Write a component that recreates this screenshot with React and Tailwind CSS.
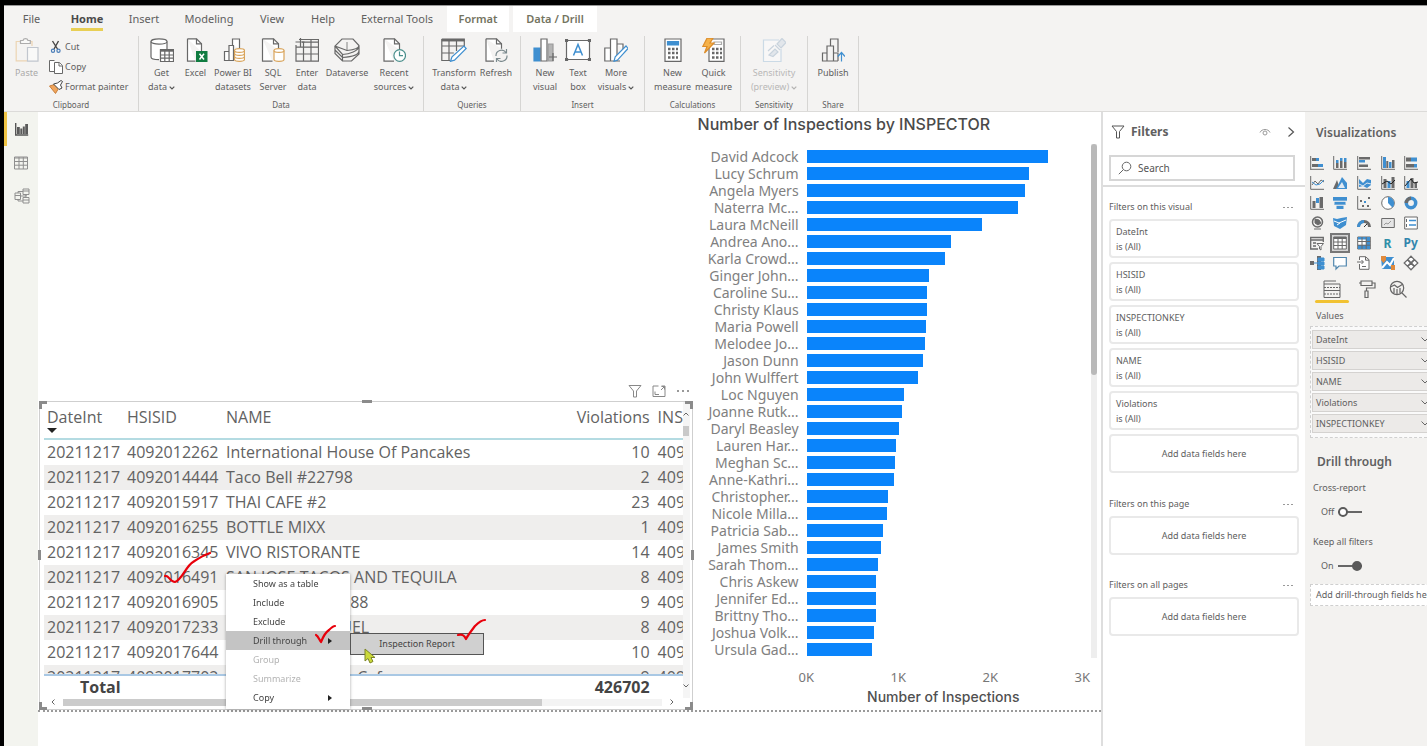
import React from "react";

const INK = "#686868";
const BLUE = "#3f8fd0";

/* ---------- ribbon icons (24 x 24) ---------- */

function Icon({ children, size = "h-6 w-6", box = "0 0 24 24", className = "" }) {
  return (
    <svg viewBox={box} className={`${size} shrink-0 ${className}`} fill="none" stroke={INK} strokeWidth="1.2" aria-hidden="true">
      {children}
    </svg>
  );
}

const Doc = () => (
  <>
    <path d="M3.5 .8h9l5 5v8M3.5 .8v22.4h8" fill="#fff" />
    <path d="M12.5 .8v5h5" />
  </>
);

const Cylinder = ({ color = "#d9a45b" }) => (
  <g stroke={color} fill="#fff">
    <path d="M13 12.5v9c0 1 2.2 1.8 5 1.8s5-.8 5-1.8v-9" />
    <ellipse cx="18" cy="12.5" rx="5" ry="1.9" />
  </g>
);

const icons = {
  paste: (
    <Icon>
      <path d="M7 3.5H1.2v19.3H12M17 8V3.5h-4" stroke="#e6b877" />
      <path d="M5.5 5.500v-3h2.500C8.500 .8 10 .6 10.500 .6s2 .2 2.500 1.900h2.300v3z" fill="#fff" />
      <path d="M12.500 9.500h10.500v13.700H12.500z" fill="#fff" stroke="#8f9bab" />
    </Icon>
  ),
  getData: (
    <Icon>
      <path d="M1 3.500v15.500c0 1.500 3.500 2.700 8 2.700V11.500h8V3.500z" fill="#fff" stroke="none" />
      <path d="M1 3.500v15.500c0 1.500 3.500 2.700 8 2.700M17 11V3.500" />
      <ellipse cx="9" cy="3.500" rx="8" ry="2.700" fill="#fff" />
      <path d="M10.500 11.500h13v12h-13z" fill="#fff" />
      <path d="M10.500 12.500h13" strokeWidth="2.400" />
      <path d="M10.500 17h13M10.500 20.200h13M14.800 12v11.500M19.200 12v11.500" />
    </Icon>
  ),
  excel: (
    <Icon>
      <Doc />
      <rect x="12" y="13" width="11.500" height="11" fill="#107c41" stroke="none" />
      <path d="M15.500 15.700l4.500 5.800M20 15.700l-4.500 5.800" stroke="#fff" strokeWidth="1.500" />
    </Icon>
  ),
  datasets: (
    <Icon>
      <path d="M3.500 22.500v-9h4.500v9zM8 22.500V7.500h4.500v15zM11.500 7.500V1h7v9" fill="#fff" />
      <g stroke="#d9a45b" fill="#fff">
        <path d="M13.500 12.500v9c0 1 2.300 1.800 5 1.800s5-.8 5-1.800v-9" />
        <ellipse cx="18.500" cy="12.500" rx="5" ry="1.900" />
        <path d="M13.500 15.500c0 2.500 10 2.500 10 0M13.500 18.500c0 2.500 10 2.500 10 0" fill="none" />
      </g>
    </Icon>
  ),
  sql: (
    <Icon>
      <path d="M1.500 .8h11l5 5v6M1.500 .8v22.400h10" fill="#fff" />
      <path d="M12.500 .8v5h5" />
      <Cylinder />
    </Icon>
  ),
  enter: (
    <Icon>
      <path d="M4 1.500h19.500v21.700H1V7M1 9.200h22.500M1 16h22.500M8.500 4v19M16 1.500v21.700M7 4.200h16.500" />
      <path d="M.5 4h9M5.500 0v9" />
    </Icon>
  ),
  dataverse: (
    <Icon size="h-6 w-[26px]" box="0 0 26 24">
      <path d="M8 1h11l6 6.500c0 3-7 4.500-12 5L1 8zM1 8l7.500 8.500C15 16 25 13 25 8M1 8v7.500L8.500 23h9L25 16V8M1 12l7.500 7.500C16 19 25 17 25 12.500M8.500 16.500V23" />
      <path d="M13 12.500V4" strokeWidth=".8" />
    </Icon>
  ),
  recent: (
    <Icon>
      <path d="M2 .8h10.500l5 5v6M2 .8v22.400h10" fill="#fff" />
      <path d="M12.500 .8v5h5" />
      <circle cx="17.700" cy="17.500" r="5.800" fill="#fff" stroke="#4a8f8c" />
      <path d="M17.500 13.500v4.200h3.500" stroke="#4a8f8c" />
    </Icon>
  ),
  transform: (
    <Icon size="h-6 w-[26px]" box="0 0 26 24">
      <path d="M.8 1h22.500v10M.8 1v21.500H9M.8 8h22.500M.8 15h12M8 3v19M15.500 3v10" />
      <path d="M.8 2.200h22.500" strokeWidth="2.500" />
      <path d="M9.500 23.300l1.500-4.500L23 8l2.200 2.500-11.700 11.600z" fill="#fff" stroke={BLUE} />
    </Icon>
  ),
  refresh: (
    <Icon>
      <path d="M2 .8h10.500l5 5v5M2 .8v22.400h8" fill="#fff" />
      <path d="M12.500 .8v5h5" />
      <path d="M12 18a5.500 5.500 0 0 1 10-3.500M23 17.500a5.500 5.500 0 0 1-10 3.500M22.500 11v4h-4M12.500 24v-3.500h4" stroke="#7b8a8e" />
    </Icon>
  ),
  newVisual: (
    <Icon>
      <path d="M1 10h6v13H1z" fill={BLUE} stroke={BLUE} />
      <path d="M8 1h6v22H8z" fill="#fff" />
      <path d="M15 6h5v17h-5z" fill="#b5b5b5" stroke="#9a9a9a" />
      <path d="M16 19h8M20 15v8" />
    </Icon>
  ),
  textBox: (
    <Icon size="h-6 w-[26px]" box="0 0 26 24">
      <path d="M1.500 2.500h23v19h-23z" fill="#fff" />
      <path d="M.5 1.500h2v2h-2zM23.500 1.500h2v2h-2zM.5 20.500h2v2h-2zM23.500 20.500h2v2h-2z" fill={INK} />
      <path d="M8.500 17.500L13 6.500l4.500 11M10 14h6" stroke={BLUE} strokeWidth="1.500" />
    </Icon>
  ),
  moreVisuals: (
    <Icon>
      <path d="M.8 10h5.700v13H.8zM6.500 1H13v22H6.500zM13 6h6v5M13 23h3" fill="#fff" />
      <path d="M10 23.300l1.200-4.500L22 8l2 2.500-10.500 11.600z" fill="#fff" stroke={BLUE} />
    </Icon>
  ),
  measure: (
    <Icon>
      <path d="M4 1h16v22.300H4z" fill="#fff" />
      <path d="M6.500 3.500h11V7h-11z" fill={BLUE} stroke={BLUE} />
      <path d="M7 11h10M7 15h10M7 19.500h10" strokeWidth="2.500" strokeDasharray="2.500 1.500" />
    </Icon>
  ),
  quick: (
    <Icon>
      <path d="M7 1h15v22.300H7z" fill="#fff" />
      <path d="M12 4h7.500v2.500H12z" stroke="#aaa" />
      <path d="M10 11h10M10 15h10M10 19.500h10" strokeWidth="2.500" strokeDasharray="2.500 1.500" />
      <path d="M5 .2h6L8 5h4L2.500 15 5 8.500H.8z" fill="#f6b24a" stroke="#dd8d2a" />
    </Icon>
  ),
  sensitivity: (
    <Icon>
      <path d="M17 2H1.500v21.500H19V11" fill="#fff" stroke="#8fb5d5" />
      <path d="M15 6L20 .5l4 4-5 5.500zM13 7l5 5M6 13l6-5.500M7 17l6-6 3 3-5 4.500z" fill="#c9d5e2" stroke="#8aa5c0" />
    </Icon>
  ),
  publish: (
    <Icon>
      <path d="M1.500 23V15H6v8zM6 15V8h6.500v15M9.500 8V1H17v13M6 23h11M12.500 23v-8H17v8" />
      <path d="M20.500 23.500V15.500M16.800 18.500l3.700-4 3.500 4" stroke={BLUE} />
    </Icon>
  ),
};

/* ---------- ribbon ---------- */

const tabs = [
  ["File", "w-[55px]"],
  ["Home", "w-14"],
  ["Insert", "w-[58px]"],
  ["Modeling", "w-[72px]"],
  ["View", "w-[54px]"],
  ["Help", "w-12"],
  ["External Tools", "w-[100px]"],
];

const groups = [
  {
    name: "Data",
    width: "w-[285px]",
    pad: "pl-1",
    items: [
      ["getData", "Get", "data", "w-[37px]", true],
      ["excel", "Excel", "", "w-[31px]"],
      ["datasets", "Power BI", "datasets", "w-11"],
      ["sql", "SQL", "Server", "w-9"],
      ["enter", "Enter", "data", "w-8"],
      ["dataverse", "Dataverse", "", "w-12"],
      ["recent", "Recent", "sources", "w-[46px]", true],
    ],
  },
  {
    name: "Queries",
    width: "w-[97px]",
    pad: "pl-2",
    items: [
      ["transform", "Transform", "data", "w-11", true],
      ["refresh", "Refresh", "", "w-10"],
    ],
  },
  {
    name: "Insert",
    width: "w-[124px]",
    pad: "pl-2",
    items: [
      ["newVisual", "New", "visual", "w-8"],
      ["textBox", "Text", "box", "w-[34px]"],
      ["moreVisuals", "More", "visuals", "w-[42px]", true],
    ],
  },
  {
    name: "Calculations",
    width: "w-24",
    pad: "pl-[7px]",
    items: [
      ["measure", "New", "measure", "w-[41px]"],
      ["quick", "Quick", "measure", "w-[41px]"],
    ],
  },
  {
    name: "Sensitivity",
    width: "w-[67px]",
    pad: "pl-[7px]",
    items: [["sensitivity", "Sensitivity", "(preview)", "w-[52px]", true, true]],
  },
  { name: "Share", width: "w-[51px]", pad: "pl-1", items: [["publish", "Publish", "", "w-[42px]"]] },
];

const Caret = () => (
  <svg viewBox="0 0 6 4" className="ml-0.5 inline-block h-1 w-[6px] align-middle" fill="none" stroke="#555" strokeWidth="1.2" aria-hidden="true">
    <path d="M.7 .7L3 3 5.300 .7" />
  </svg>
);

function Ribbon() {
  return (
    <header className="border-b border-[#dcdbd9] bg-[#f4f3f2] text-[#606060]">
      <nav className="flex h-[26px] text-[11px]" aria-label="Ribbon tabs">
        {tabs.map(([t, w]) => (
          <button key={t} className={`${w} flex shrink-0 flex-col items-center whitespace-nowrap pt-1 leading-[18px]`}>
            {t === "Home" ? (
              <span className="border-b-[3px] border-[#e8cf55] font-bold text-[#4a4a4a]">{t}</span>
            ) : (
              <span>{t}</span>
            )}
          </button>
        ))}
        <button className="mr-1 w-[62px] shrink-0 bg-white font-semibold text-[#74745f]">Format</button>
        <button className="w-[84px] shrink-0 bg-white font-semibold text-[#74745f]">Data / Drill</button>
      </nav>
      <div className="flex h-[79px] pt-1 text-[9px] leading-[14px]">
        <section className="flex w-[135px] shrink-0 flex-col border-r border-[#d6d5d3]">
          <div className="flex flex-1">
            <button disabled className="flex w-[45px] flex-col items-center pt-0.5 opacity-50">
              {icons.paste}
              <span className="mt-1">Paste</span>
            </button>
            <div className="flex flex-col gap-1.5 whitespace-nowrap pt-1">
              <button className="flex items-center gap-0.5">
                <svg viewBox="0 0 14 14" className="h-3.5 w-3.5" fill="none" aria-hidden="true">
                  <path d="M3.500 1l5 8M9.500 1L5 9" stroke="#444" strokeWidth="1.400" />
                  <circle cx="4" cy="10.700" r="1.600" stroke="#4a7db8" strokeWidth="1.200" />
                  <circle cx="9.500" cy="10.700" r="1.600" stroke="#4a7db8" strokeWidth="1.200" />
                </svg>
                Cut
              </button>
              <button className="flex items-center gap-0.5">
                <svg viewBox="0 0 14 14" className="h-3.5 w-3.5" fill="#fff" stroke={INK} aria-hidden="true">
                  <path d="M5.500 11.500h-5v-11h5M5.500 2.500h5l3 3v8h-8z" />
                  <path d="M10 2.500v3.500h3.500" />
                </svg>
                Copy
              </button>
              <button className="flex items-center gap-0.5">
                <svg viewBox="0 0 14 14" className="h-3.5 w-3.5" aria-hidden="true">
                  <path d="M.5 6l5-1.500 4 4-3 5z" fill="#f0a55c" stroke="#c97f3c" />
                  <path d="M4.500 4L10 9.500 13 8l-1.500-3L13.500 1.500 12 .5 8.500 3z" fill="#fff" stroke="#444" />
                </svg>
                Format painter
              </button>
            </div>
          </div>
          <p className="text-center text-[8px] leading-3">Clipboard</p>
        </section>
        {groups.map((g) => (
          <section key={g.name} className={`${g.width} flex shrink-0 flex-col border-r border-[#d6d5d3]`}>
            <div className={`flex flex-1 ${g.pad}`}>
              {g.items.map(([icon, a, b, w, caret, off]) => (
                <button key={icon} disabled={!!off} className={`${w} flex shrink-0 flex-col items-center whitespace-nowrap pt-0.5 ${off ? "opacity-40" : ""}`}>
                  {icons[icon]}
                  <span className="mt-1">{a}</span>
                  <span>
                    {b}
                    {caret && <Caret />}
                  </span>
                </button>
              ))}
            </div>
            <p className="text-center text-[8px] leading-3">{g.name}</p>
          </section>
        ))}
      </div>
    </header>
  );
}

function Rail() {
  return (
    <nav className="flex w-[34px] shrink-0 flex-col bg-[#f3f4ef]" aria-label="Views">
      <button aria-label="Report view" className="flex h-[34px] items-center border-l-[3px] border-[#efc445] pl-2">
        <svg viewBox="0 0 14 14" className="h-3.5 w-3.5" aria-hidden="true">
          <path d="M.7 1v12h12.500" stroke="#555" strokeWidth="1.400" fill="none" />
          <path d="M2 5h2.800v7H2zM5.300 6.500h2V12h-2zM7.800 4.500h2V12h-2zM10.200 2H13v10h-2.800z" fill="#5a5a5a" />
        </svg>
      </button>
      <button aria-label="Data view" className="flex h-[33px] items-center pl-[10px]">
        <svg viewBox="0 0 14 14" className="h-3.5 w-3.5" fill="none" stroke="#8f8f8f" aria-hidden="true">
          <path d="M.5 1h13v12H.5zM.5 2h13M.5 5.500h13M.5 9.200h13M5 1v12M9.300 1v12" />
        </svg>
      </button>
      <button aria-label="Model view" className="flex h-[34px] items-center pl-[10px]">
        <svg viewBox="0 0 16 16" className="h-4 w-4" fill="none" stroke="#8f8f8f" aria-hidden="true">
          <path d="M9 1h6v5.500H9zM9 9.500h6V15H9zM1 5h5.500v6.500H1zM9 3.500H4V5M4 11.500V13h5M1 7.500h5.500M9 3h6M9 12h6M6.500 8h5.500V6.500v3" />
        </svg>
      </button>
    </nav>
  );
}

/* ---------- table visual ---------- */

const rows = [
  ["4092012262", "International House Of Pancakes", 10],
  ["4092014444", "Taco Bell #22798", 2],
  ["4092015917", "THAI CAFE #2", 23],
  ["4092016255", "BOTTLE MIXX", 1],
  ["4092016345", "VIVO RISTORANTE", 14],
  ["4092016491", "SAN JOSE TACOS AND TEQUILA", 8],
  ["4092016905", "FIREHOUSE SUB 88", 9],
  ["4092017233", "HERMANO MIGUEL", 8],
  ["4092017644", "SUBWAY", 10],
  ["4092017702", "Mediterranean & Cafe", 9],
];

const menu = [
  ["Show as a table"],
  ["Include"],
  ["Exclude"],
  ["Drill through", "sub"],
  ["Group", "off"],
  ["Summarize", "off"],
  ["Copy", "sub"],
];

const Tick = ({ className, d, box }) => (
  <svg viewBox={box} className={`absolute ${className}`} fill="none" stroke="#e8000b" strokeWidth="2.2" strokeLinecap="round" strokeLinejoin="round" aria-hidden="true">
    <path d={d} />
  </svg>
);

function ContextMenu() {
  return (
    <>
      <ul role="menu" className="absolute left-[186px] top-[172px] w-[124px] bg-white pb-0.5 text-[9px] leading-[19px] text-[#444] shadow-[0_0_3px_rgba(0,0,0,0.35)]">
        {menu.map(([label, kind]) => (
          <li key={label} role="none">
            <button
              role="menuitem"
              disabled={kind === "off"}
              className={`flex w-full items-center justify-between pl-[27px] pr-[18px] ${label === "Drill through" ? "bg-[#c4c4c4]" : ""} ${kind === "off" ? "text-[#b3b3b3]" : ""}`}
            >
              {label}
              {kind === "sub" && (
                <svg viewBox="0 0 4 6" className="h-[6px] w-1" fill="#222" aria-hidden="true">
                  <path d="M0 0l4 3-4 3z" />
                </svg>
              )}
            </button>
          </li>
        ))}
      </ul>
      <button role="menuitem" className="absolute left-[310px] top-[231px] h-[22px] w-[134px] border border-[#555] bg-[#d0d0d0] text-[9px] text-[#444]">
        Inspection Report
      </button>
      <svg viewBox="0 0 12 16" className="absolute left-[324px] top-[246px] h-4 w-3" aria-hidden="true">
        <path d="M1 1v12l3-2.500 2 4.500 3-1.500-2-4h4z" fill="#cbd93a" stroke="#7c8526" />
      </svg>
      <Tick className="left-[124px] top-[148px] h-9 w-12" box="0 0 48 36" d="M1 26c4-1 5 6 10 6 7-2 11-16 18-20 6-4 11-7 17-9" />
      <Tick className="left-[274px] top-[222px] h-5 w-6" box="0 0 24 20" d="M2 11c2 1 3 4 5 7 2-5 5-10 8-12 2-2 4-4 6-4" />
      <Tick className="left-[415px] top-[216px] h-6 w-8" box="0 0 32 24" d="M3 17c4-1 6 0 8 4 2-4 6-9 9-13 3-3 6-6 10-6" />
    </>
  );
}

function Handle({ className }) {
  return <span className={`absolute bg-[#8b8b8b] ${className}`} />;
}

function TableVisual() {
  return (
    <div className="relative mr-0.5 flex h-[309px] flex-col border border-[#cfcfcf] bg-white pl-1 text-[#626262]">
      <div className="flex min-h-0 flex-1">
        <div className="h-[296px] min-w-0 flex-1 overflow-hidden">
          <table className="w-full table-fixed border-separate border-spacing-0 whitespace-nowrap text-left text-[16px] leading-[25px] [font-family:'Open_Sans','Noto_Sans',sans-serif]">
            <thead>
              <tr className="h-[38px]">
                <th className="w-[80px] border-b-2 border-[#b4dbe2] pl-[3px] align-top font-normal">
                  <span className="block pt-1 leading-[22px]">DateInt</span>
                  <svg viewBox="0 0 10 5" className="h-[5px] w-2.5" fill="#222" aria-hidden="true">
                    <path d="M0 0h10L5 5z" />
                  </svg>
                </th>
                <th className="w-[99px] border-b-2 border-[#b4dbe2] pl-[3px] pt-1 align-top font-normal leading-[22px]">HSISID</th>
                <th className="border-b-2 border-[#b4dbe2] pl-[3px] pt-1 align-top font-normal leading-[22px]">NAME</th>
                <th className="w-[90px] border-b-2 border-[#b4dbe2] pt-1 text-right align-top font-normal leading-[22px]">Violations</th>
                <th className="w-[33px] overflow-hidden border-b-2 border-[#b4dbe2] pl-2 pt-1 align-top font-normal leading-[22px]">INSP</th>
              </tr>
            </thead>
            <tbody>
              {rows.map(([id, name, v]) => (
                <tr key={id} className="h-[25px] even:bg-[#efeeed]">
                  <td className="py-0 pl-[3px]">20211217</td>
                  <td className="py-0 pl-[3px]">{id}</td>
                  <td className="py-0 pl-[3px]">{name}</td>
                  <td className="py-0 text-right">{v}</td>
                  <td className="overflow-hidden py-0 pl-2">{id.slice(0, 4)}</td>
                </tr>
              ))}
            </tbody>
            <tfoot className="sticky bottom-0 bg-white font-bold text-[#444]">
              <tr>
                <th className="border-t-2 border-[#a9c8e4] pl-9 font-bold leading-[22px]">Total</th>
                <td className="border-t-2 border-[#a9c8e4]" colSpan="2" />
                <td className="border-t-2 border-[#a9c8e4] py-0 text-right leading-[22px]">426702</td>
                <td className="border-t-2 border-[#a9c8e4]" />
              </tr>
            </tfoot>
          </table>
        </div>
        <div className="mr-0.5 flex w-[7px] flex-col items-center bg-[#f5f5f5] py-2.5">
          <svg viewBox="0 0 6 4" className="h-1 w-[6px]" fill="none" stroke="#666" aria-hidden="true">
            <path d="M.5 3.500L3 1l2.500 2.500" />
          </svg>
          <span className="mt-2.5 h-2.5 w-[6px] bg-[#c9c9c9]" />
          <svg viewBox="0 0 6 4" className="mt-auto h-1 w-[6px]" fill="none" stroke="#666" aria-hidden="true">
            <path d="M.5 .5L3 3 5.500 .5" />
          </svg>
        </div>
      </div>
      <div className="mb-[3px] ml-[7px] mr-[18px] flex h-2 items-center gap-2">
        <svg viewBox="0 0 4 6" className="h-[6px] w-1" fill="none" stroke="#666" aria-hidden="true">
          <path d="M3.500 .5L1 3l2.500 2.500" />
        </svg>
        <div className="h-[7px] flex-1 bg-[#f3f3f3]">
          <div className="h-full w-4/5 bg-[#cbcbcb]" />
        </div>
        <svg viewBox="0 0 4 6" className="h-[6px] w-1" fill="none" stroke="#666" aria-hidden="true">
          <path d="M.5 .5L3 3 .5 5.500" />
        </svg>
      </div>
      <Handle className="-left-px -top-px h-[3px] w-2" />
      <Handle className="-left-px -top-px h-2 w-[3px]" />
      <Handle className="-right-px -top-px h-[3px] w-2" />
      <Handle className="-right-px -top-px h-2 w-[3px]" />
      <Handle className="-bottom-px -left-px h-[3px] w-2" />
      <Handle className="-bottom-px -left-px h-2 w-[3px]" />
      <Handle className="-bottom-px -right-px h-[3px] w-2" />
      <Handle className="-bottom-px -right-px h-2 w-[3px]" />
      <Handle className="-top-0.5 left-[322px] h-[3px] w-2.5" />
      <Handle className="-bottom-px left-[322px] h-[3px] w-2.5" />
      <Handle className="-left-0.5 top-[148px] h-2.5 w-[3px]" />
      <Handle className="-right-0.5 top-[148px] h-2.5 w-[3px]" />
      <ContextMenu />
    </div>
  );
}

/* ---------- bar chart ---------- */

const inspectors = [
  ["David Adcock", 2628], ["Lucy Schrum", 2421], ["Angela Myers", 2383], ["Naterra Mc...", 2301],
  ["Laura McNeill", 1908], ["Andrea Ano...", 1570], ["Karla Crowd...", 1505], ["Ginger John...", 1330],
  ["Caroline Su...", 1314], ["Christy Klaus", 1309], ["Maria Powell", 1303], ["Melodee Jo...", 1292],
  ["Jason Dunn", 1270], ["John Wulffert", 1211], ["Loc Nguyen", 1058], ["Joanne Rutk...", 1036],
  ["Daryl Beasley", 1009], ["Lauren Har...", 976], ["Meghan Sc...", 960], ["Anne-Kathri...", 949],
  ["Christopher...", 883], ["Nicole Milla...", 878], ["Patricia Sab...", 829], ["James Smith", 807],
  ["Sarah Thom...", 780], ["Chris Askew", 758], ["Jennifer Ed...", 758], ["Brittny Tho...", 758],
  ["Joshua Volk...", 731], ["Ursula Gad...", 709],
];

function ChartVisual() {
  return (
    <section className="flex min-w-0 flex-col pb-[3px] pl-[3px]">
      <h2 className="text-[16px] font-medium leading-6 text-[#4a4a4a] [font-family:Inter,Roboto,sans-serif]">Number of Inspections by INSPECTOR</h2>
      <div className="mt-2 flex">
        <div className="min-w-0 flex-1 pt-1">
          {inspectors.map(([name, n]) => (
            <div key={name} className="flex h-[17px] items-center gap-2">
              <span className="w-[101px] shrink-0 whitespace-nowrap text-right text-[14px] leading-[17px] text-[#808080]">{name}</span>
              <div className="mr-[9px] flex-1">
                <div className="h-[13px] bg-[#0a84fb]" style={{ width: `${n / 30}%` }} />
              </div>
            </div>
          ))}
        </div>
        <div className="mr-1 w-[6px] bg-[#eeeeee]">
          <div className="h-[231px] rounded-full bg-[#b9b9b9]" />
        </div>
      </div>
      <div className="ml-[101px] mr-[11px] mt-[9px] flex justify-between text-[13px] leading-5 text-[#777]">
        <span>0K</span>
        <span>1K</span>
        <span>2K</span>
        <span>3K</span>
      </div>
      <p className="ml-[88px] text-center text-[14px] font-medium leading-5 text-[#505050] [font-family:Inter,Roboto,sans-serif]">Number of Inspections</p>
    </section>
  );
}

function Canvas() {
  return (
    <main className="min-w-0 flex-1 bg-white">
      <div className="grid grid-cols-[656fr_406fr] border-b-2 border-dotted border-[#9a9a9a]">
        <div className="flex min-w-0 flex-col justify-end pl-px">
          <div className="mb-[3px] flex items-center justify-end gap-2.5 pr-[5px]">
            <button aria-label="Filters on this visual">
              <svg viewBox="0 0 14 14" className="h-3.5 w-3.5" fill="none" stroke="#888" aria-hidden="true">
                <path d="M1 1.500h12l-4.500 5.500v6h-3V7z" />
              </svg>
            </button>
            <button aria-label="Focus mode">
              <svg viewBox="0 0 14 14" className="h-3.5 w-3.5" fill="none" stroke="#888" aria-hidden="true">
                <path d="M6.500 2H1v10.500h12V2H9.500M9 6l3.500-3.500M9.500 2.500h3M12.500 5.500v-3M3 7.500v3h4" />
              </svg>
            </button>
            <button aria-label="More options">
              <svg viewBox="0 0 14 14" className="h-3.5 w-3.5" fill="#777" aria-hidden="true">
                <circle cx="2" cy="7" r="1" />
                <circle cx="7" cy="7" r="1" />
                <circle cx="12" cy="7" r="1" />
              </svg>
            </button>
          </div>
          <TableVisual />
        </div>
        <ChartVisual />
      </div>
    </main>
  );
}

/* ---------- filters pane ---------- */

const card = "h-[39px] w-[190px] rounded-sm border-2 border-[#e9e9e9] bg-white";

function FilterHeading({ children }) {
  return (
    <div className="mb-1.5 flex h-[14px] items-center justify-between pr-3">
      <h3>{children}</h3>
      <button aria-label={`More options: ${children}`}>
        <svg viewBox="0 0 10 2" className="mt-1 h-0.5 w-2.5" fill="#999" aria-hidden="true">
          <path d="M0 0h2v1H0zM4 0h2v1H4zM8 0h2v1H8z" />
        </svg>
      </button>
    </div>
  );
}

const AddFields = () => <button className={`${card} text-center`}>Add data fields here</button>;

function FiltersPane() {
  return (
    <aside className="w-[204px] shrink-0 border-l-2 border-[#dedede] bg-white text-[9px] leading-[15px] text-[#606060]">
      <div className="border-b-2 border-[#dcdcdc] pb-1 pl-1.5 pr-2.5">
        <div className="flex h-[39px] items-center pl-0.5">
          <svg viewBox="0 0 14 14" className="h-3.5 w-3.5" fill="none" stroke="#555" aria-hidden="true">
            <path d="M1 1h12L8.500 6.500V13h-3V6.500z" />
          </svg>
          <h2 className="ml-1.5 text-xs font-bold">Filters</h2>
          <button aria-label="Show or hide the pane" className="ml-auto">
            <svg viewBox="0 0 12 8" className="h-2 w-3" fill="none" stroke="#999" aria-hidden="true">
              <path d="M1 4.500C2.500 .5 9.500 .5 11 4.500" />
              <circle cx="6" cy="5" r="2" />
            </svg>
          </button>
          <button aria-label="Collapse pane" className="ml-4">
            <svg viewBox="0 0 8 12" className="h-3 w-2" fill="none" stroke="#555" strokeWidth="1.200" aria-hidden="true">
              <path d="M1.500 1.500L6.500 6l-5 4.500" />
            </svg>
          </button>
        </div>
        <label className="mt-1 flex h-[26px] items-center gap-1.5 border-2 border-[#d6d6d6] px-[7px]">
          <svg viewBox="0 0 14 14" className="h-3.5 w-3.5 shrink-0" fill="none" stroke="#666" aria-hidden="true">
            <circle cx="8.500" cy="5.500" r="4.300" />
            <path d="M5.500 8.500L.8 13.200" />
          </svg>
          <input aria-label="Search" placeholder="Search" className="min-w-0 flex-1 bg-transparent text-[10px] outline-none placeholder:text-[#555]" />
        </label>
      </div>
      <div className="flex flex-col pl-1.5 pt-3">
        <FilterHeading>Filters on this visual</FilterHeading>
        <div className="flex flex-col gap-1">
          {["DateInt", "HSISID", "INSPECTIONKEY", "NAME", "Violations"].map((f) => (
            <div key={f} className={`${card} pl-[5px] pt-[3px]`}>
              <p>{f}</p>
              <p>is (All)</p>
            </div>
          ))}
          <AddFields />
        </div>
        <div className="mt-[23px]">
          <FilterHeading>Filters on this page</FilterHeading>
          <AddFields />
        </div>
        <div className="mt-[22px]">
          <FilterHeading>Filters on all pages</FilterHeading>
          <AddFields />
        </div>
      </div>
    </aside>
  );
}

/* ---------- visualizations pane ---------- */

const G = "#6a6a6a";
const glyphs = [
  ["Stacked bar chart", <><path d="M.7 0v14" stroke={G} /><path d="M2 2h4v3H2zM2 8h6v3H2z" fill={G} /><path d="M6 2h3v3H6zM8 8h5v3H8z" fill={BLUE} /><path d="M1 13.300h13" stroke={G} /></>],
  ["Stacked column chart", <><path d="M.7 0v13.300H14" stroke={G} /><path d="M3 7h2.500v5H3zM7 5h2.500v7H7zM11 6h2.500v6H11z" fill={G} /><path d="M3 4h2.500v3H3zM7 2h2.500v3H7zM11 2h2.500v4H11z" fill={BLUE} /></>],
  ["Clustered bar chart", <><path d="M.7 0v14M1 13.300h13" stroke={G} /><path d="M2 1h11v2.500H2zM2 8.500h9V11H2z" fill={G} /><path d="M2 4h6v2.500H2z" fill={BLUE} /></>],
  ["Clustered column chart", <><path d="M.7 0v13.300H14" stroke={G} /><path d="M2 1h3v11H2zM8 6h2.500v6H8z" fill={BLUE} /><path d="M5.300 5h2v7h-2zM11 4h2.500v8H11z" fill={G} /></>],
  ["100% stacked bar chart", <><path d="M.7 0v14M1 13.300h13" stroke={G} /><path d="M2 1.500h5v4H2zM2 8h8v3.500H2z" fill={G} /><path d="M7 1.500h6v4H7zM10 8h3v3.500h-3z" fill={BLUE} /></>],
  ["Line chart", <><path d="M.7 0v13.300H14" stroke={G} /><path d="M2 9l3-4 3 3 3-4 3 2" stroke={G} /><path d="M2 6l4 3 4-1 4-4" stroke={BLUE} /></>],
  ["Area chart", <><path d="M0 13L4 4l3 9z" fill={G} /><path d="M3 13L9 1l5 6v6z" fill={BLUE} /><path d="M5 12l4-6 3 6z" fill="#dfe9f2" /></>],
  ["Stacked area chart", <><path d="M.7 0v13.300H14" stroke={G} /><path d="M2 3l4 4 4-4 4 1v5l-4 3-4-2-4 1z" fill={BLUE} /><path d="M2 8l4 2 4-3 4 1" stroke="#dfe9f2" /></>],
  ["Line and stacked column chart", <><path d="M.7 0v13.300H14" stroke={G} /><path d="M2.500 3h3v9h-3zM10.500 1h3v11h-3z" fill={G} /><path d="M6.500 5h3v7h-3z" fill={BLUE} /><path d="M1 8l5-3 4 3 4-4" stroke="#222" /></>],
  ["Line and clustered column chart", <><path d="M.7 0v13.300H14" stroke={G} /><path d="M2.500 5h3v7h-3z" fill={BLUE} /><path d="M6.500 2h3v10h-3zM10.500 6h2.500v6h-2.500z" fill={G} /><path d="M1 10l6-7 3 4 4-1" stroke="#222" /></>],
  ["Waterfall chart", <><path d="M.7 0v13.300H14" stroke={G} /><path d="M2.500 5h3v7h-3zM9.500 1H13v11H9.500z" fill={G} /><path d="M6 2h3v5H6z" fill={BLUE} /></>],
  ["Funnel chart", <><path d="M0 1h14v4H0zM1.500 5.500h11V9h-11zM3.500 9.500h7V13h-7z" fill={BLUE} /><path d="M0 5.200h14M2 9.200h10" stroke="#eee" /></>],
  ["Scatter chart", <><path d="M.7 0v13.300H14" stroke={G} /><path d="M3 4h2v2H3zM5 9h2v2H5zM11 1h2v2h-2zM10 9h2v2h-2z" fill={G} /><path d="M7 5h2v2H7z" fill={BLUE} /></>],
  ["Pie chart", <><circle cx="7" cy="7" r="6.300" fill="#fff" stroke={G} /><path d="M7 1v6l4.500 4.500A6.300 6.300 0 0 0 7 1z" fill={BLUE} /></>],
  ["Donut chart", <><circle cx="7" cy="7" r="4.700" stroke={BLUE} strokeWidth="3.500" /><path d="M7 2.300A4.700 4.700 0 0 0 2.300 7" stroke={G} strokeWidth="3.500" /></>],
  ["Map", <><circle cx="7.500" cy="6" r="5" stroke={G} strokeWidth="1.500" /><path d="M5 3l4 1 2 3-3 2-3-2zM4 13h7" fill={G} stroke={G} /></>],
  ["Filled map", <><path d="M0 2l4 1 4-1 6-1-1 8-6 4-6-3z" fill={BLUE} /><path d="M1 5l5 2 7-3M4 9l3-2" stroke="#fff" /></>],
  ["Gauge", <><path d="M1.500 11a5.500 5.500 0 0 1 11 0" stroke={G} strokeWidth="3" /><path d="M1.500 11A5.500 5.500 0 0 1 7 5.500" stroke={BLUE} strokeWidth="3" /><path d="M7 11l3-3" stroke="#333" /></>],
  ["Card", <><path d="M.7 2.500h12.600v9H.7z" fill="#e5e5e5" stroke={G} /><path d="M3 9l2-2 2 1 3-3" stroke="#999" /></>],
  ["Multi-row card", <><path d="M.7 1h12.600v12H.7z" stroke={G} fill="#fff" /><path d="M5 4.500h7M5 9h7" stroke={BLUE} strokeWidth="1.500" /><path d="M2.500 3v3M2.500 8v3" stroke={G} /></>],
  ["Slicer", <><path d="M8 13H.7V1.500h12.600V6M.7 4h12.600M3 7h3M3 10h3" stroke={G} strokeWidth="1.300" /><path d="M7 7.500h6.500L11 10.500V14l-1.500-1v-2.500z" stroke={G} fill="#fff" /></>],
  ["Table", <><path d="M.7 1h12.600v12H.7z" fill="#fff" stroke={G} /><path d="M.7 2h12.600" stroke={G} strokeWidth="2" /><path d="M.7 6h12.600M.7 9.500h12.600M5 1v12M9.200 1v12" stroke={G} /></>],
  ["Matrix", <><path d="M.7 1h12.600v12H.7z" fill="#fff" stroke={G} /><path d="M9 1h4v12H9zM1 9h12v4H1zM1 1h12v2.500H1z" fill={BLUE} /><path d="M.7 5.500h12.600M.7 9.200h12.600M5 1v12M9.200 1v12" stroke={G} /></>],
  ["R script visual", <text x="2.500" y="11.500" fontSize="12" fontWeight="700" fill="#2f8fa8">R</text>],
  ["Python visual", <text x="-.5" y="11" fontSize="12" fontWeight="700" fill="#3285ad">Py</text>],
  ["Decomposition tree", <><path d="M0 5h4v4H0z" fill={G} /><path d="M7 0h4v14H7z" fill={G} /><path d="M4 7h4M8 2h6v3H8zM8 6h6v3H8zM8 10h6v3H8z" fill={BLUE} stroke={BLUE} /></>],
  ["Q&A", <path d="M.7 1.500h12.600v8.500H6l-3 3v-3H.7z" fill="#fff" stroke="#4f86ad" strokeWidth="1.200" />],
  ["Paginated report", <><path d="M2.500 4V.7h6l3.500 3v9.600H2.500V8M8.500 .7v3.500H12" fill="#fff" stroke={G} /><path d="M0 6h6M4.500 4l2 2-2 2M5 10.500h4" stroke={G} /></>],
  ["ArcGIS maps", <><path d="M0 1h13v12H1z" fill={BLUE} /><path d="M1 12L6 6l3 3 4-7" stroke="#fff" strokeWidth="2" /><path d="M0 0h5v4L2.500 7 0 4zM10 9h4v5h-4z" fill="#e08a3c" /></>],
  ["Power Apps", <g stroke={G} strokeWidth="1.300"><path d="M7 .2l3.200 3.200L7 6.600 3.800 3.400zM7 7.400l3.200 3.200L7 13.800l-3.200-3.200zM3.400 3.800l3.200 3.200-3.200 3.200L.2 7zM10.600 3.800L13.800 7l-3.200 3.200L7.400 7z" fill="#fff" /></g>],
];

function Switch({ id, on, children }) {
  return (
    <div className="flex items-center gap-1 pl-2 leading-[15px]">
      <label htmlFor={id} className="whitespace-nowrap">{children}</label>
      <input
        id={id}
        type="checkbox"
        role="switch"
        defaultChecked={on}
        className="relative h-2.5 w-6 appearance-none before:absolute before:inset-x-0 before:top-1 before:h-0.5 before:bg-[#666] after:absolute after:left-0 after:top-0 after:h-2.5 after:w-2.5 after:rounded-full after:border-2 after:border-[#5a5a5a] after:bg-white checked:after:left-3.5 checked:after:bg-[#5a5a5a]"
      />
    </div>
  );
}

function VisualizationsPane() {
  return (
    <aside className="w-[122px] shrink-0 overflow-hidden bg-[#f3f2f0] text-[9px] text-[#606060]">
      <h2 className="pl-[11px] pt-3 text-[12px] font-semibold leading-[18px]">Visualizations</h2>
      <div className="mt-[11px] grid w-[118px] grid-cols-5">
        {glyphs.map(([name, g]) => (
          <button key={name} aria-label={name} className="grid h-5 place-items-center">
            <span className={name === "Table" ? "bg-[#d5d5d5] p-px outline-2 outline-[#777]" : "p-px"}>
              <svg viewBox="0 0 14 14" className="h-3.5 w-3.5 shrink-0 overflow-visible" fill="none" aria-hidden="true">{g}</svg>
            </span>
          </button>
        ))}
      </div>
      <div className="mt-[7px] flex h-6 items-start gap-[13px] pl-2.5">
        <button aria-label="Fields" className="flex w-[34px] flex-col items-center gap-0.5">
          <svg viewBox="0 0 18 18" className="h-[18px] w-[18px]" fill="none" stroke="#666" aria-hidden="true">
            <path d="M1 1h12M1 1v16.500h16V4H1M1 10.500h16" />
            <path d="M1 7.500h16M1 14h16" strokeDasharray="2 1" />
          </svg>
          <span className="h-[3px] w-full rounded bg-[#f1c232]" />
        </button>
        <button aria-label="Format" className="-ml-1">
          <svg viewBox="0 0 18 18" className="h-[18px] w-[18px]" fill="none" stroke="#666" strokeWidth="1.200" aria-hidden="true">
            <path d="M3 1h11v4.500H3zM1 3h2M14 3h3v5H8.500v3M7 11h3v6.500H7z" />
          </svg>
        </button>
        <button aria-label="Analytics">
          <svg viewBox="0 0 18 18" className="h-[18px] w-[18px]" fill="none" stroke="#666" strokeWidth="1.200" aria-hidden="true">
            <circle cx="8" cy="8" r="6.700" />
            <path d="M13 13l4.500 4.500M1.500 7l4-2 3 2.500L14 4M5 8v5M8 9v5M11 8v5" />
          </svg>
        </button>
      </div>
      <h3 className="pl-[11px] pt-1 leading-[15px]">Values</h3>
      <div className="mt-[3px] ml-[5px] flex flex-col gap-0.5 border-y border-l border-dashed border-[#d0d0d0] bg-[#fafafa] pb-1 pl-px pt-[3px]">
        {["DateInt", "HSISID", "NAME", "Violations", "INSPECTIONKEY"].map((f) => (
          <button key={f} className="flex h-[19px] w-[124px] items-center justify-between border border-[#d4d2d0] bg-[#eceae8] pl-[3px] pr-1.5">
            {f}
            <svg viewBox="0 0 8 5" className="h-[5px] w-2" fill="none" stroke="#666" aria-hidden="true">
              <path d="M.5 .5L4 4 7.500 .5" />
            </svg>
          </button>
        ))}
      </div>
      <h2 className="mt-[15px] pl-3 text-[12px] font-semibold leading-[18px]">Drill through</h2>
      <div className="flex flex-col pl-2 pt-[9px]">
        <h3 className="mb-[9px] leading-[15px]">Cross-report</h3>
        <Switch id="cross-report">Off</Switch>
        <h3 className="mb-[9px] mt-[15px] leading-[15px]">Keep all filters</h3>
        <Switch id="keep-filters" on>On</Switch>
      </div>
      <button className="ml-[5px] mt-[11px] h-[22px] w-[140px] whitespace-nowrap border border-dashed border-[#cfcfcf] bg-white pl-[5px] text-left">
        Add drill-through fields here
      </button>
    </aside>
  );
}

export default function App() {
  return (
    <div className="flex h-screen flex-col overflow-hidden border-l-4 border-t-[5px] border-black bg-white [font-family:'Noto_Sans','Open_Sans',sans-serif]">
      <div className="h-px shrink-0 bg-[#999]" />
      <Ribbon />
      <div className="flex min-h-0 flex-1">
        <Rail />
        <Canvas />
        <FiltersPane />
        <VisualizationsPane />
      </div>
    </div>
  );
}
